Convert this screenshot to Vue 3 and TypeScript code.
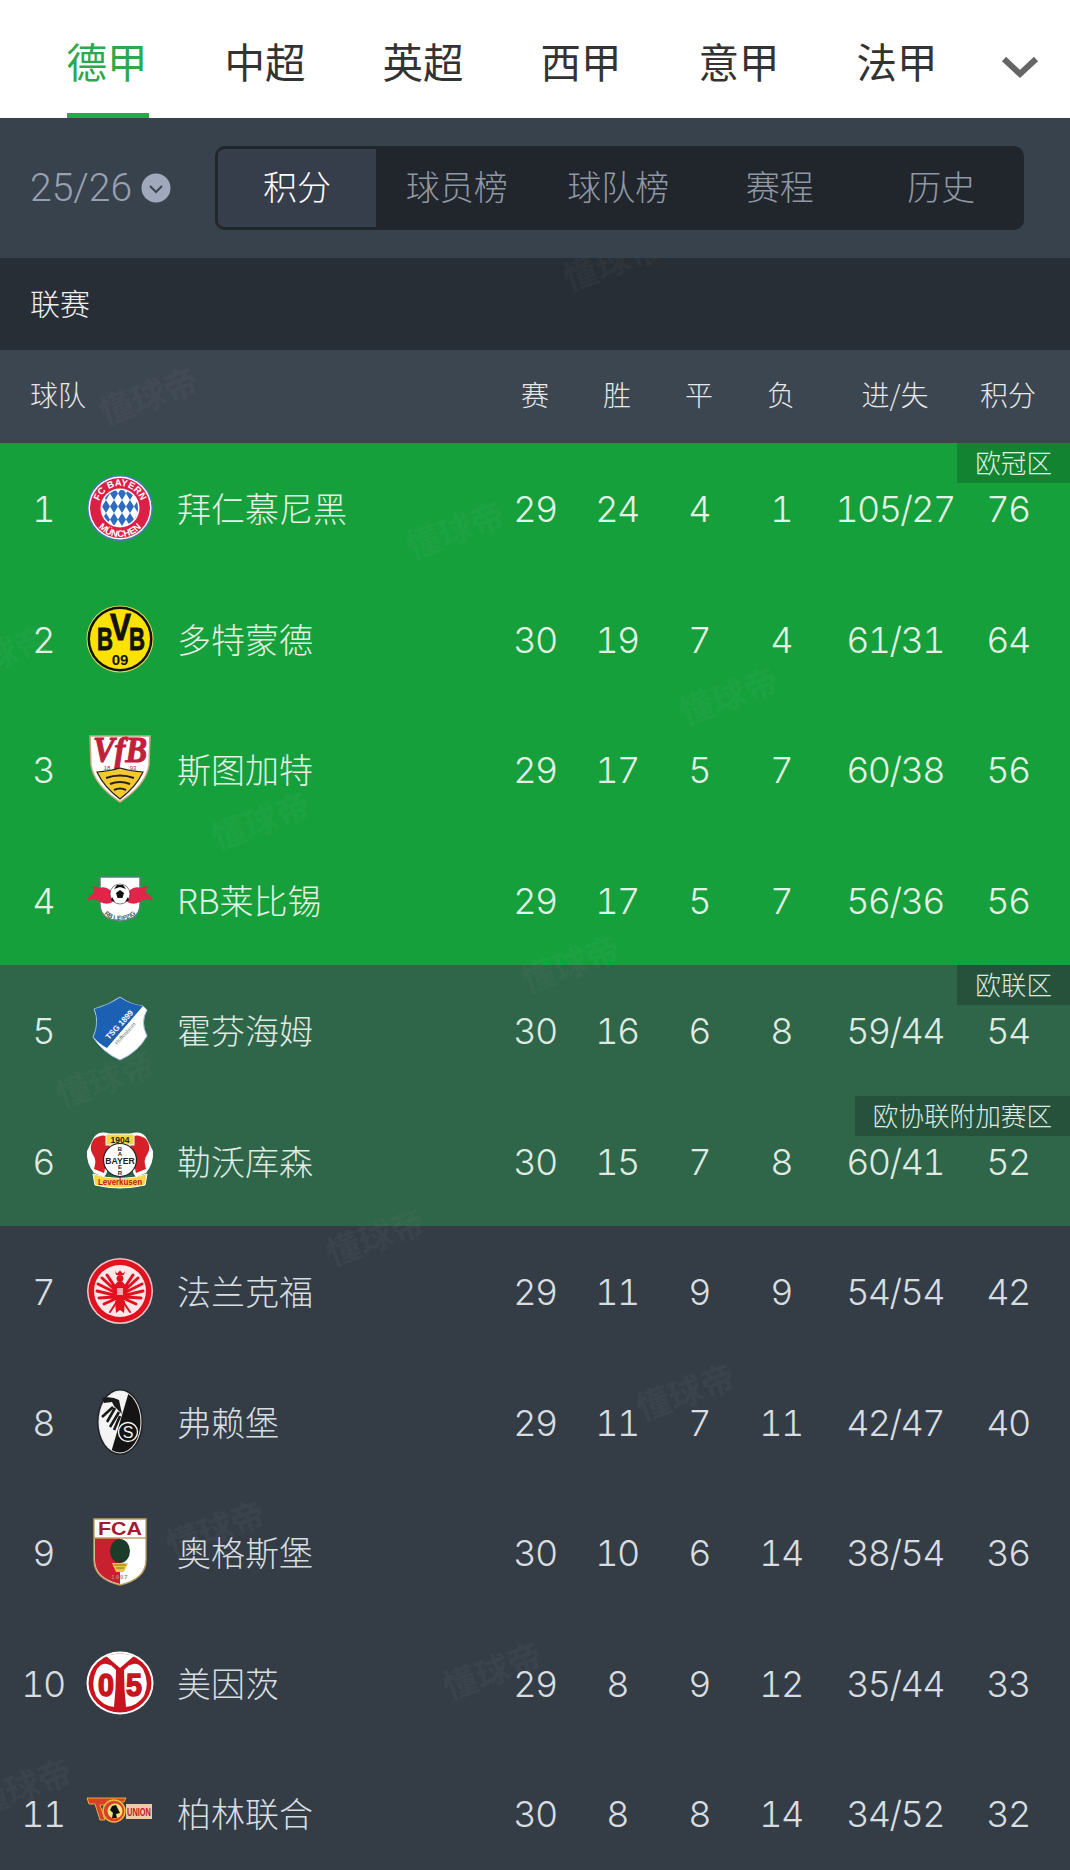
<script setup lang="ts">
interface Team { id: string; name: string; p: number; w: number; d: number; l: number; gd: string; pts: number; zone: string; tag?: string }

const leagues: string[] = ['德甲', '中超', '英超', '西甲', '意甲', '法甲']
const segments: string[] = ['积分', '球员榜', '球队榜', '赛程', '历史']
const columns: string[] = ['赛', '胜', '平', '负', '进/失', '积分']

const teams: Team[] = [
  { id: 'fcb', name: '拜仁慕尼黑', p: 29, w: 24, d: 4, l: 1, gd: '105/27', pts: 76, zone: 'ucl', tag: '欧冠区' },
  { id: 'bvb', name: '多特蒙德', p: 30, w: 19, d: 7, l: 4, gd: '61/31', pts: 64, zone: 'ucl' },
  { id: 'vfb', name: '斯图加特', p: 29, w: 17, d: 5, l: 7, gd: '60/38', pts: 56, zone: 'ucl' },
  { id: 'rbl', name: 'RB莱比锡', p: 29, w: 17, d: 5, l: 7, gd: '56/36', pts: 56, zone: 'ucl' },
  { id: 'tsg', name: '霍芬海姆', p: 30, w: 16, d: 6, l: 8, gd: '59/44', pts: 54, zone: 'uel', tag: '欧联区' },
  { id: 'b04', name: '勒沃库森', p: 30, w: 15, d: 7, l: 8, gd: '60/41', pts: 52, zone: 'uel', tag: '欧协联附加赛区' },
  { id: 'sge', name: '法兰克福', p: 29, w: 11, d: 9, l: 9, gd: '54/54', pts: 42, zone: '' },
  { id: 'scf', name: '弗赖堡', p: 29, w: 11, d: 7, l: 11, gd: '42/47', pts: 40, zone: '' },
  { id: 'fca', name: '奥格斯堡', p: 30, w: 10, d: 6, l: 14, gd: '38/54', pts: 36, zone: '' },
  { id: 'm05', name: '美因茨', p: 29, w: 8, d: 9, l: 12, gd: '35/44', pts: 33, zone: '' },
  { id: 'fcu', name: '柏林联合', p: 30, w: 8, d: 8, l: 14, gd: '34/52', pts: 32, zone: '' },
]

const marks: Array<[number, number]> = [
  [612, -17], [148, 117], [455, 251], [0, 375], [728, 417], [260, 542], [570, 685],
  [105, 800], [375, 958], [685, 1113], [215, 1250], [492, 1392], [22, 1508],
]
</script>

<template>
  <div class="page">
    <nav class="leagues">
      <div v-for="(l, i) in leagues" :key="l" class="league" :class="{ on: i === 0 }">{{ l }}</div>
      <svg class="more" viewBox="0 0 38 24" width="38" height="24"><path d="M3 4 L19 19 L35 4" fill="none" stroke="#666" stroke-width="6" /></svg>
    </nav>

    <section class="season">
      <div class="year">
        <span>25/26</span>
        <svg viewBox="0 0 30 30" width="30" height="30"><circle cx="15" cy="15" r="14.5" fill="#a0a8bc" /><path d="M9 13 L15 19 L21 13" fill="none" stroke="#3a4450" stroke-width="2" /></svg>
      </div>
      <div class="segment">
        <div v-for="(s, i) in segments" :key="s" class="seg" :class="{ on: i === 0 }">{{ s }}</div>
      </div>
    </section>

    <div class="section-title"><span>联赛</span></div>

    <div class="row head">
      <div class="team-head">球队</div>
      <div v-for="c in columns" :key="c" class="num">{{ c }}</div>
    </div>

    <div v-for="(t, i) in teams" :key="t.id" class="row team" :class="t.zone">
      <div class="rank">{{ i + 1 }}</div>
      <div class="crest">
        <svg v-if="t.id === 'fcb'" viewBox="0 0 68 68" width="68" height="68">
          <defs>
            <pattern id="loz" width="8" height="13" patternUnits="userSpaceOnUse"><polygon points="4,0 8,6.5 4,13 0,6.5" fill="#2f6cc0" /></pattern>
            <path id="fcbTop" d="M12 34 A22 22 0 0 1 56 34" />
            <path id="fcbBot" d="M5 34 A29 29 0 0 0 63 34" />
          </defs>
          <circle cx="34" cy="34" r="33" fill="#4a78b8" />
          <circle cx="34" cy="34" r="31.5" fill="#fff" />
          <circle cx="34" cy="34" r="30" fill="#dc1f45" />
          <circle cx="34" cy="34" r="19.5" fill="#fff" />
          <circle cx="34" cy="34" r="18" fill="url(#loz)" />
          <text class="svg-b" font-size="9.5" fill="#fff"><textPath href="#fcbTop" startOffset="50%" text-anchor="middle">FC BAYERN</textPath></text>
          <text class="svg-b" font-size="9.5" fill="#fff"><textPath href="#fcbBot" startOffset="50%" text-anchor="middle">MÜNCHEN</textPath></text>
        </svg>

        <svg v-else-if="t.id === 'bvb'" viewBox="0 0 68 68" width="68" height="68">
          <circle cx="34" cy="34" r="33.5" fill="#e8dc50" />
          <circle cx="34" cy="34" r="32.5" fill="#111" />
          <circle cx="34" cy="34" r="30" fill="#fde100" />
          <g stroke="#111" stroke-width="0.9">
            <text class="svg-b" x="11" y="45" font-size="32" textLength="16" lengthAdjust="spacingAndGlyphs" fill="#111">B</text>
            <text class="svg-b" x="24" y="35" font-size="37" textLength="21" lengthAdjust="spacingAndGlyphs" fill="#111">V</text>
            <text class="svg-b" x="43" y="45" font-size="32" textLength="16" lengthAdjust="spacingAndGlyphs" fill="#111">B</text>
          </g>
          <text class="svg-b" x="34" y="60" font-size="15" text-anchor="middle" fill="#111">09</text>
        </svg>

        <svg v-else-if="t.id === 'vfb'" viewBox="0 0 68 68" width="68" height="68">
          <path d="M4 1 H64 L63 30 Q60 50 34 67 Q8 50 5 30 Z" fill="#fff" stroke="#c9a880" stroke-width="1.5" />
          <text x="34" y="27" font-size="35" text-anchor="middle" class="svg-sb" textLength="54" lengthAdjust="spacingAndGlyphs" fill="#c0203a" stroke="#c0203a" stroke-width="1.1">VfB</text>
          <text x="21" y="35" font-size="6" text-anchor="middle" class="svg-r" fill="#c0203a">18</text>
          <text x="47" y="35" font-size="6" text-anchor="middle" class="svg-r" fill="#c0203a">93</text>
          <path d="M11 37 Q24 36 34 33 Q44 36 57 37 Q50 52 34 64 Q18 52 11 37 Z" fill="#f5c92f" stroke="#222" stroke-width="1.2" />
          <path d="M20 43 Q34 38 48 43 M24 49 Q34 45 44 49 M28 55 Q34 52 40 55" fill="none" stroke="#222" stroke-width="2" />
        </svg>

        <svg v-else-if="t.id === 'rbl'" viewBox="0 0 68 68" width="68" height="68">
          <defs><path id="rblArc" d="M14 36 Q16 54 34 54 Q52 54 54 36" /></defs>
          <path d="M14 11 H54 V38 Q54 54 34 55 Q14 54 14 38 Z" fill="#fff" stroke="#5a7f7a" stroke-width="1.5" />
          <path d="M28 29 Q22 19 13 22 Q10 19 6 21 Q9 24 8 27 Q3 29 1 35 Q9 31 14 36 Q22 40 28 35 Z" fill="#e0244a" />
          <path d="M40 29 Q46 19 55 22 Q58 19 62 21 Q59 24 60 27 Q65 29 67 35 Q59 31 54 36 Q46 40 40 35 Z" fill="#e0244a" />
          <circle cx="34" cy="28" r="10" fill="#fff" stroke="#333" stroke-width="0.6" />
          <polygon points="34,24 38,27 36.5,32 31.5,32 30,27" fill="#111" />
          <path d="M28 23 L31 19 L37 19 L40 23 L34 21 Z M26 31 L29 36 L25 34 Z M42 31 L39 36 L43 34 Z" fill="#111" />
          <text class="svg-b" font-size="6.2" fill="#3d5a55"><textPath href="#rblArc" startOffset="50%" text-anchor="middle">RB LEIPZIG</textPath></text>
        </svg>

        <svg v-else-if="t.id === 'tsg'" viewBox="0 0 68 68" width="68" height="68">
          <path d="M34 1 Q45 9 57 10 L61 14 Q54 26 61 40 Q52 56 34 64 Q16 56 7 41 Q14 26 8 13 Q23 9 34 1 Z" fill="#fff" stroke="#a8c4e0" stroke-width="1" />
          <path d="M34 1.5 Q45 9 57 10 L21 52 Q13 48 7.5 41 Q14 26 8.5 13 Q23 9 34 1.5 Z" fill="#1c60b3" />
          <text class="svg-b" transform="translate(23 44) rotate(-47)" font-size="8" fill="#fff">TSG 1899</text>
          <text class="svg-r" transform="translate(31 49) rotate(-47)" font-size="5.5" fill="#6a7680">Hoffenheim</text>
        </svg>

        <svg v-else-if="t.id === 'b04'" viewBox="0 0 68 68" width="68" height="68">
          <path d="M8 10 Q14 3 24 7 L26 30 Q22 46 18 50 L8 46 Q0 36 1 24 Z" fill="#fff" />
          <path d="M60 10 Q54 3 44 7 L42 30 Q46 46 50 50 L60 46 Q68 36 67 24 Z" fill="#fff" />
          <path d="M8 12 Q16 6 23 10 L24 22 L18 46 L8 42 Q11 32 7 28 Q2 20 8 12 Z" fill="#d62027" />
          <path d="M60 12 Q52 6 45 10 L44 22 L50 46 L60 42 Q57 32 61 28 Q66 20 60 12 Z" fill="#d62027" />
          <rect x="20" y="7" width="28" height="11" fill="#f7d646" stroke="#fff" />
          <text class="svg-b" x="34" y="16" font-size="8.5" text-anchor="middle" fill="#222">1904</text>
          <circle cx="34" cy="33" r="16.5" fill="#fff" stroke="#222" stroke-width="1.2" />
          <text class="svg-b" x="34" y="36.5" font-size="8.6" text-anchor="middle" fill="#222">BAYER</text>
          <text class="svg-b" x="34" y="23.5" font-size="6" text-anchor="middle" fill="#222">B</text>
          <text class="svg-b" x="34" y="29" font-size="6" text-anchor="middle" fill="#222">A</text>
          <text class="svg-b" x="34" y="42" font-size="6" text-anchor="middle" fill="#222">E</text>
          <text class="svg-b" x="34" y="47.5" font-size="6" text-anchor="middle" fill="#222">R</text>
          <path d="M7 47 Q34 56 61 47 L59 58 Q34 64 9 58 Z" fill="#f7d646" stroke="#fff" />
          <text class="svg-b" x="34" y="58" font-size="8.6" text-anchor="middle" textLength="44" lengthAdjust="spacingAndGlyphs" fill="#b81820">Leverkusen</text>
        </svg>

        <svg v-else-if="t.id === 'sge'" viewBox="0 0 68 68" width="68" height="68">
          <circle cx="34" cy="34" r="33" fill="#f2c7c7" />
          <circle cx="34" cy="34" r="31.5" fill="#e1111f" />
          <circle cx="34" cy="34" r="26" fill="#fbe9e9" />
          <g fill="none" stroke="#e1111f" stroke-width="3" stroke-linecap="round">
            <path d="M29 30 L21 18 M28 32 L16 21 M28 35 L12 27 M28 38 L11 34 M28 40 L13 41 M29 42 L18 47" />
            <path d="M39 30 L47 18 M40 32 L52 21 M40 35 L56 27 M40 38 L57 34 M40 40 L55 41 M39 42 L50 47" />
            <path d="M30 46 L24 55 M38 46 L44 55" stroke-width="2" />
          </g>
          <ellipse cx="34" cy="35" rx="6.5" ry="11" fill="#e1111f" />
          <circle cx="34" cy="21.5" r="3.4" fill="#e1111f" />
          <path d="M29 14 L31 16.5 L34 13.5 L37 16.5 L39 14 L38 18 H30 Z" fill="#e1111f" />
          <path d="M29 44 H39 L38 56 L34 53 L30 56 Z" fill="#e1111f" />
          <rect x="31" y="31" width="6" height="7" fill="#fbe9e9" opacity=".7" />
        </svg>

        <svg v-else-if="t.id === 'scf'" viewBox="0 0 68 68" width="68" height="68">
          <defs><clipPath id="scfClip"><ellipse cx="34" cy="34" rx="20.5" ry="30.5" /></clipPath></defs>
          <ellipse cx="34" cy="34" rx="23" ry="33" fill="#222" />
          <ellipse cx="34" cy="34" rx="21.5" ry="31.5" fill="#e8e8e8" />
          <g clip-path="url(#scfClip)">
            <rect x="0" y="0" width="68" height="68" fill="#f4f4f4" />
            <polygon points="44,0 24,68 68,68 68,0" fill="#141414" />
          </g>
          <path d="M16 10 Q26 8 33 12 L36 26 L28 18 L26 14 L18 15 Z" fill="#1a1a1a" />
          <path d="M29 20 L21 34 M33 24 L24 39 M34 28 L28 42 M27 19 L16 29" stroke="#1a1a1a" stroke-width="2.6" fill="none" />
          <circle cx="42" cy="44" r="9.5" fill="none" stroke="#f4f4f4" stroke-width="1.4" />
          <text class="svg-r" x="42" y="50" font-size="16" text-anchor="middle" fill="#f4f4f4">S</text>
        </svg>

        <svg v-else-if="t.id === 'fca'" viewBox="0 0 68 68" width="68" height="68">
          <path d="M8 1 H60 V42 Q60 61 34 67 Q8 61 8 42 Z" fill="#fff" stroke="#c0a060" stroke-width="1.4" />
          <path d="M9 20 H34 V66 Q9 60 9 42 Z" fill="#c8202f" />
          <line x1="8" y1="20" x2="60" y2="20" stroke="#c0a060" stroke-width="1.4" />
          <text class="svg-b" x="34" y="16.5" font-size="18" text-anchor="middle" textLength="44" lengthAdjust="spacingAndGlyphs" fill="#a81830">FCA</text>
          <ellipse cx="34" cy="33" rx="10" ry="12" fill="#1a3c28" />
          <path d="M26 45 H42 L38 54 H30 Z" fill="#e6c840" />
          <path d="M28 47 H40 M30 50 H38" stroke="#8a6a10" stroke-width="0.9" />
          <text class="svg-b" x="34" y="61" font-size="6" text-anchor="middle" fill="#b08a70" letter-spacing="1">1907</text>
        </svg>

        <svg v-else-if="t.id === 'm05'" viewBox="0 0 68 68" width="68" height="68">
          <ellipse cx="34" cy="34" rx="33.5" ry="31.5" fill="#fff" />
          <ellipse cx="34" cy="34" rx="31.5" ry="29.5" fill="#c8141e" />
          <path d="M20 7 Q34 2 48 7 L34 19 Z" fill="#fff" />
          <path d="M30 21 Q19 9 11 20 Q4 34 10 47 Q17 57 28 58 Q30 40 30 21 Z" fill="#fff" />
          <path d="M38 21 Q49 9 57 20 Q64 34 58 47 Q51 57 40 58 Q38 40 38 21 Z" fill="#fff" />
          <g stroke="#c8141e" stroke-width="1.5">
            <text class="svg-b" x="20" y="47" font-size="31" text-anchor="middle" textLength="16" lengthAdjust="spacingAndGlyphs" fill="#c8141e">0</text>
            <text class="svg-b" x="48" y="47" font-size="31" text-anchor="middle" textLength="16" lengthAdjust="spacingAndGlyphs" fill="#c8141e">5</text>
          </g>
        </svg>

        <svg v-else viewBox="0 0 68 68" width="68" height="68">
          <path d="M1 19 H40 L38 23 H28 L26 26 H14 L19 41 H14 L9 25 H3 Z" fill="#d8402a" stroke="#eeb83a" stroke-width="0.9" />
          <rect x="40" y="25" width="26" height="15" fill="#efcaa4" />
          <text class="svg-b" x="53" y="36.5" font-size="10" text-anchor="middle" textLength="24" lengthAdjust="spacingAndGlyphs" fill="#b81c24">UNION</text>
          <circle cx="28" cy="32" r="11" fill="#d8402a" stroke="#eeb83a" stroke-width="1.5" />
          <circle cx="29" cy="32" r="7.5" fill="#f6e27a" />
          <path d="M26 27 L30 26 L32 30 L34 34 L30 35 L31 39 L26 39 L27 34 L24 31 Z" fill="#111" />
        </svg>
      </div>
      <div class="name"><span>{{ t.name }}</span></div>
      <div class="num">{{ t.p }}</div>
      <div class="num">{{ t.w }}</div>
      <div class="num">{{ t.d }}</div>
      <div class="num">{{ t.l }}</div>
      <div class="num">{{ t.gd }}</div>
      <div class="num">{{ t.pts }}</div>
      <div v-if="t.tag" class="tag">{{ t.tag }}</div>
    </div>

    <div class="marks">
      <span v-for="m in marks" :key="m[0] + '-' + m[1]" class="mark" :style="{ left: m[0] + 'px', top: m[1] + 'px' }">懂球帝</span>
    </div>
  </div>
</template>

<style scoped>
.page {
  position: relative;
  width: 1070px;
  height: 1870px;
  overflow: hidden;
  background: #343d46;
  font-family: "Noto Sans CJK SC", "Liberation Sans", sans-serif;
  font-weight: 300;
}
.leagues {
  display: flex;
  align-items: center;
  height: 118px;
  padding: 0 0 0 28px;
  box-sizing: border-box;
  background: #fff;
  position: relative;
}
.league {
  position: relative;
  width: 158px;
  height: 118px;
  box-sizing: border-box;
  padding-top: 2px;
  text-align: center;
  font-size: 40.5px;
  font-weight: 400;
  line-height: 118px;
  color: #333;
}
.league.on { color: #2ea84a; }
.league.on::after {
  content: "";
  position: absolute;
  left: 39px;
  bottom: 0;
  width: 82px;
  height: 5px;
  background: #22ab42;
}
.more { position: absolute; left: 1001px; top: 55px; }
.season {
  display: flex;
  align-items: center;
  height: 140px;
  padding-left: 30px;
  background: #38424c;
}
.year {
  display: flex;
  align-items: center;
  gap: 9px;
  width: 185px;
  color: #98a0b0;
  font-family: Roboto, "Liberation Sans", sans-serif;
  font-size: 39px;
  font-weight: 300;
}
.segment {
  display: flex;
  width: 809px;
  height: 84px;
  padding: 3px 0 3px 3px;
  box-sizing: border-box;
  background: #20262c;
  border-radius: 10px;
}
.seg {
  flex: 0 0 161.5px;
  text-align: center;
  font-size: 34px;
  line-height: 74px;
  color: #9098a4;
}
.seg.on {
  flex-basis: 158px;
  background: #353e4a;
  color: #fff;
  border-radius: 6px 0 0 6px;
}
.section-title {
  height: 92px;
  line-height: 88px;
  padding-left: 30px;
  background: #282e36;
  color: #f0f0f0;
  font-size: 30px;
}
.row {
  position: relative;
  display: grid;
  grid-template-columns: 86px 68px 340px 82px 82px 82px 82px 146px 80px;
  padding-right: 22px;
  align-items: center;
}
.head {
  height: 93px;
  padding-bottom: 6px;
  box-sizing: border-box;
  background: #3c4650;
  color: #e6e8ea;
  font-size: 28px;
}
.team-head { grid-column: 1 / 4; padding-left: 30px; }
.team {
  height: 130.5px;
  font-family: Inter, "Noto Sans CJK SC", sans-serif;
  font-size: 36px;
  font-weight: 300;
  font-variant-numeric: tabular-nums;
  color: #d8dde0;
}
.team.ucl { background: #16a03b; color: #e4f3e6; }
.team.uel { background: #2f6549; color: #dfeae2; }
.rank { text-align: center; padding-top: 2px; letter-spacing: -1.6px; }
.team .num { padding-top: 2px; letter-spacing: -1.6px; }
.crest { height: 68px; }
.crest svg { display: block; }
.name {
  padding-left: 23px;
  font-family: "Noto Sans CJK SC", "Liberation Sans", sans-serif;
  font-size: 34px;
  line-height: 46px;
}
.num { text-align: center; }
.tag {
  position: absolute;
  top: 0;
  right: 0;
  height: 40px;
  line-height: 38px;
  padding: 0 18px;
  background: rgba(0, 0, 0, 0.18);
  font-family: "Noto Sans CJK SC", sans-serif;
  font-size: 25.6px;
}
.marks {
  position: absolute;
  left: 0;
  top: 258px;
  width: 1070px;
  height: 1612px;
  overflow: hidden;
  pointer-events: none;
}
.mark {
  position: absolute;
  width: 110px;
  margin-left: -55px;
  text-align: center;
  font-size: 34px;
  line-height: 40px;
  font-weight: 700;
  color: rgba(255, 255, 255, 0.05);
  transform: rotate(-20deg);
}
.svg-b { font-family: "Liberation Sans", sans-serif; font-weight: 700; }
.svg-r { font-family: "Liberation Sans", sans-serif; font-weight: 400; }
.svg-sb { font-family: "Liberation Serif", serif; font-weight: 700; font-style: italic; }
</style>
